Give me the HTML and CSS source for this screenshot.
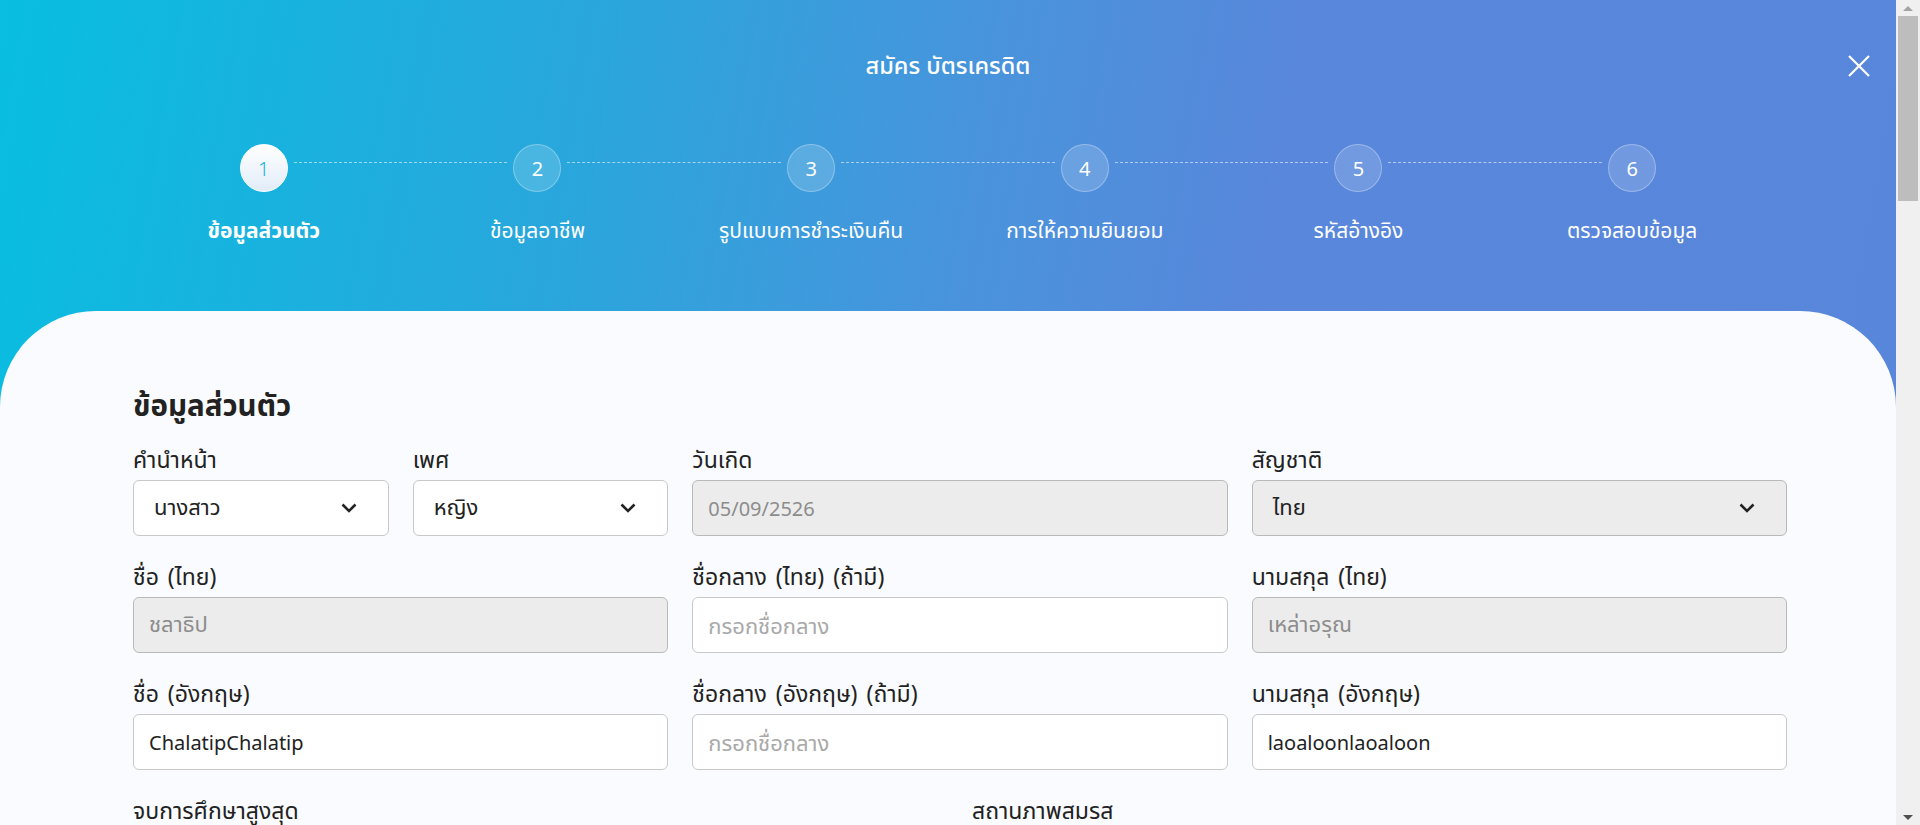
FILE: index.html
```html
<!DOCTYPE html>
<html lang="th">
<head>
<meta charset="utf-8">
<title>สมัคร บัตรเครดิต</title>
<link rel="stylesheet" href="styles.css">
</head>
<body>
<div class="app">
  <header class="head">
    <h1 class="title">สมัคร บัตรเครดิต</h1>
    <button class="close" aria-label="ปิด">
      <svg width="22" height="22" viewBox="0 0 22 22"><path d="M1 1 L21 21 M21 1 L1 21" stroke="#fff" stroke-width="2.2" fill="none"/></svg>
    </button>
    <ol class="steps">
      <li class="step active"><span class="dot">1</span><span class="step-label">ข้อมูลส่วนตัว</span></li>
      <li class="step"><span class="dot">2</span><span class="step-label">ข้อมูลอาชีพ</span></li>
      <li class="step"><span class="dot">3</span><span class="step-label">รูปแบบการชำระเงินคืน</span></li>
      <li class="step"><span class="dot">4</span><span class="step-label">การให้ความยินยอม</span></li>
      <li class="step"><span class="dot">5</span><span class="step-label">รหัสอ้างอิง</span></li>
      <li class="step last"><span class="dot">6</span><span class="step-label">ตรวจสอบข้อมูล</span></li>
    </ol>
  </header>

  <main class="card">
    <div class="form">
      <h2 class="section-title">ข้อมูลส่วนตัว</h2>

      <div class="row three">
        <div class="pair">
          <div class="field">
            <label class="label">คำนำหน้า</label>
            <div class="select"><span>นางสาว</span><svg class="chev" width="16" height="10" viewBox="0 0 16 10"><path d="M1.5 1.5 L8 8 L14.5 1.5" stroke="#222" stroke-width="2.6" fill="none"/></svg></div>
          </div>
          <div class="field">
            <label class="label">เพศ</label>
            <div class="select"><span>หญิง</span><svg class="chev" width="16" height="10" viewBox="0 0 16 10"><path d="M1.5 1.5 L8 8 L14.5 1.5" stroke="#222" stroke-width="2.6" fill="none"/></svg></div>
          </div>
        </div>
        <div class="field">
          <label class="label">วันเกิด</label>
          <input class="input" type="text" value="05/09/2526" disabled>
        </div>
        <div class="field">
          <label class="label">สัญชาติ</label>
          <div class="select disabled"><span>ไทย</span><svg class="chev" width="16" height="10" viewBox="0 0 16 10"><path d="M1.5 1.5 L8 8 L14.5 1.5" stroke="#222" stroke-width="2.6" fill="none"/></svg></div>
        </div>
      </div>

      <div class="row three">
        <div class="field">
          <label class="label">ชื่อ (ไทย)</label>
          <input class="input th" type="text" value="ชลาธิป" disabled>
        </div>
        <div class="field">
          <label class="label">ชื่อกลาง (ไทย) (ถ้ามี)</label>
          <input class="input th" type="text" placeholder="กรอกชื่อกลาง">
        </div>
        <div class="field">
          <label class="label">นามสกุล (ไทย)</label>
          <input class="input th" type="text" value="เหล่าอรุณ" disabled>
        </div>
      </div>

      <div class="row three">
        <div class="field">
          <label class="label">ชื่อ (อังกฤษ)</label>
          <input class="input" type="text" value="ChalatipChalatip">
        </div>
        <div class="field">
          <label class="label">ชื่อกลาง (อังกฤษ) (ถ้ามี)</label>
          <input class="input th" type="text" placeholder="กรอกชื่อกลาง">
        </div>
        <div class="field">
          <label class="label">นามสกุล (อังกฤษ)</label>
          <input class="input" type="text" value="laoaloonlaoaloon">
        </div>
      </div>

      <div class="row two">
        <div class="field">
          <label class="label">จบการศึกษาสูงสุด</label>
          <div class="select"><span>ปริญญาตรี</span><svg class="chev" width="16" height="10" viewBox="0 0 16 10"><path d="M1.5 1.5 L8 8 L14.5 1.5" stroke="#222" stroke-width="2.6" fill="none"/></svg></div>
        </div>
        <div class="field">
          <label class="label">สถานภาพสมรส</label>
          <div class="select"><span>โสด</span><svg class="chev" width="16" height="10" viewBox="0 0 16 10"><path d="M1.5 1.5 L8 8 L14.5 1.5" stroke="#222" stroke-width="2.6" fill="none"/></svg></div>
        </div>
      </div>
    </div>
  </main>
</div>

<div class="scrollbar" aria-hidden="true">
  <div class="sb-btn"><span class="tri up"></span></div>
  <div class="sb-track"><div class="sb-thumb"></div></div>
  <div class="sb-btn"><span class="tri down"></span></div>
</div>
</body>
</html>
```

FILE: styles.css
```css
* { box-sizing: border-box; }

html, body {
  margin: 0;
  height: 100%;
  overflow: hidden;
}

body {
  display: flex;
  font-family: "Noto Sans", "Noto Sans Thai", "Noto Sans Thai UI", sans-serif;
  color: #222;
  background: #f9fbfe;
}

.app {
  flex: 1;
  min-width: 0;
  height: 100%;
  overflow: hidden;
  display: flex;
  flex-direction: column;
  background: linear-gradient(100deg, #08bee1 0%, #2aa6dc 30%, #4a93dc 50%, #5887db 64%, #5886db 100%);
}

/* ---------- header ---------- */
.head {
  position: relative;
  padding-top: 47px;
}

.title {
  margin: 0;
  height: 36px;
  line-height: 36px;
  text-align: center;
  color: #fff;
  font-size: 23.5px;
  font-weight: 500;
}

.close {
  position: absolute;
  top: 55px;
  right: 26px;
  width: 22px;
  height: 22px;
  padding: 0;
  border: 0;
  background: none;
  display: flex;
}

.steps {
  list-style: none;
  margin: 61px auto 0;
  padding: 0;
  width: 1642px;
  display: grid;
  grid-template-columns: repeat(6, 1fr);
}

.step {
  position: relative;
  display: flex;
  flex-direction: column;
  align-items: center;
}

.step::after {
  content: "";
  position: absolute;
  top: 18px;
  left: calc(50% + 30px);
  width: calc(100% - 60px);
  border-top: 1px dashed rgba(255, 255, 255, 0.55);
}

.step.last::after { display: none; }

.dot {
  width: 48px;
  height: 48px;
  border-radius: 50%;
  display: flex;
  align-items: center;
  justify-content: center;
  color: #fff;
  font-size: 20px;
  background: rgba(255, 255, 255, 0.16);
  border: 1px solid rgba(255, 255, 255, 0.3);
}

.step.active .dot {
  background: linear-gradient(180deg, #ffffff 0%, #e2ecf7 100%);
  border-color: #fff;
  color: #14b5de;
  font-weight: 300;
}

.step-label {
  margin-top: 23px;
  line-height: 30px;
  font-size: 21px;
  color: #fff;
  white-space: nowrap;
}

.step.active .step-label { font-weight: 700; }

/* ---------- card ---------- */
.card {
  flex: 1;
  margin-top: 66px;
  background: #f9fbfe;
  border-radius: 96px 96px 0 0;
}

.form {
  padding: 77px 109px 0 133px;
}

.section-title {
  margin: 0 0 22px;
  font-size: 29.5px;
  line-height: 34px;
  font-weight: 700;
  color: #222;
}

.row {
  display: grid;
  gap: 24px;
  margin-bottom: 25px;
}

.row.three { grid-template-columns: repeat(3, 1fr); }
.row.two { grid-template-columns: repeat(2, 1fr); }

.pair {
  display: grid;
  grid-template-columns: 1fr 1fr;
  gap: 24px;
}

.field {
  display: flex;
  flex-direction: column;
  min-width: 0;
}

.label {
  font-size: 23px;
  line-height: 30px;
  margin-bottom: 6px;
  color: #222;
  word-spacing: 3px;
  white-space: nowrap;
}

.input,
.select {
  height: 56px;
  width: 100%;
  border: 1px solid #c9c9c9;
  border-radius: 6px;
  background: #fff;
  font-family: inherit;
  font-size: 20px;
  color: #222;
}

.input {
  padding: 0 15px;
  outline: none;
}

.input.th { font-size: 22px; }

.input::placeholder { color: #a9a9a9; }

.input:disabled {
  background: #ececec;
  border-color: #b9b9b9;
  color: #8c8c8c;
  -webkit-text-fill-color: #8c8c8c;
  opacity: 1;
}

.select {
  display: flex;
  align-items: center;
  justify-content: space-between;
  padding: 0 31px 0 20px;
  font-size: 22px;
}

.select.disabled {
  background: #ececec;
  border-color: #b9b9b9;
}

.chev { flex: none; }

/* ---------- fake scrollbar ---------- */
.scrollbar {
  width: 24px;
  flex: none;
  height: 100%;
  background: #f0f0f0;
  display: flex;
  flex-direction: column;
}

.sb-btn {
  height: 16px;
  display: flex;
  align-items: center;
  justify-content: center;
}

.tri {
  width: 0;
  height: 0;
  border-left: 5px solid transparent;
  border-right: 5px solid transparent;
}

.tri.up { border-bottom: 5px solid #a3a3a3; }
.tri.down { border-top: 5px solid #505050; }

.sb-track {
  flex: 1;
  padding: 0 2px 0 2px;
}

.sb-thumb {
  height: 185px;
  background: #bdbdbd;
}
```
